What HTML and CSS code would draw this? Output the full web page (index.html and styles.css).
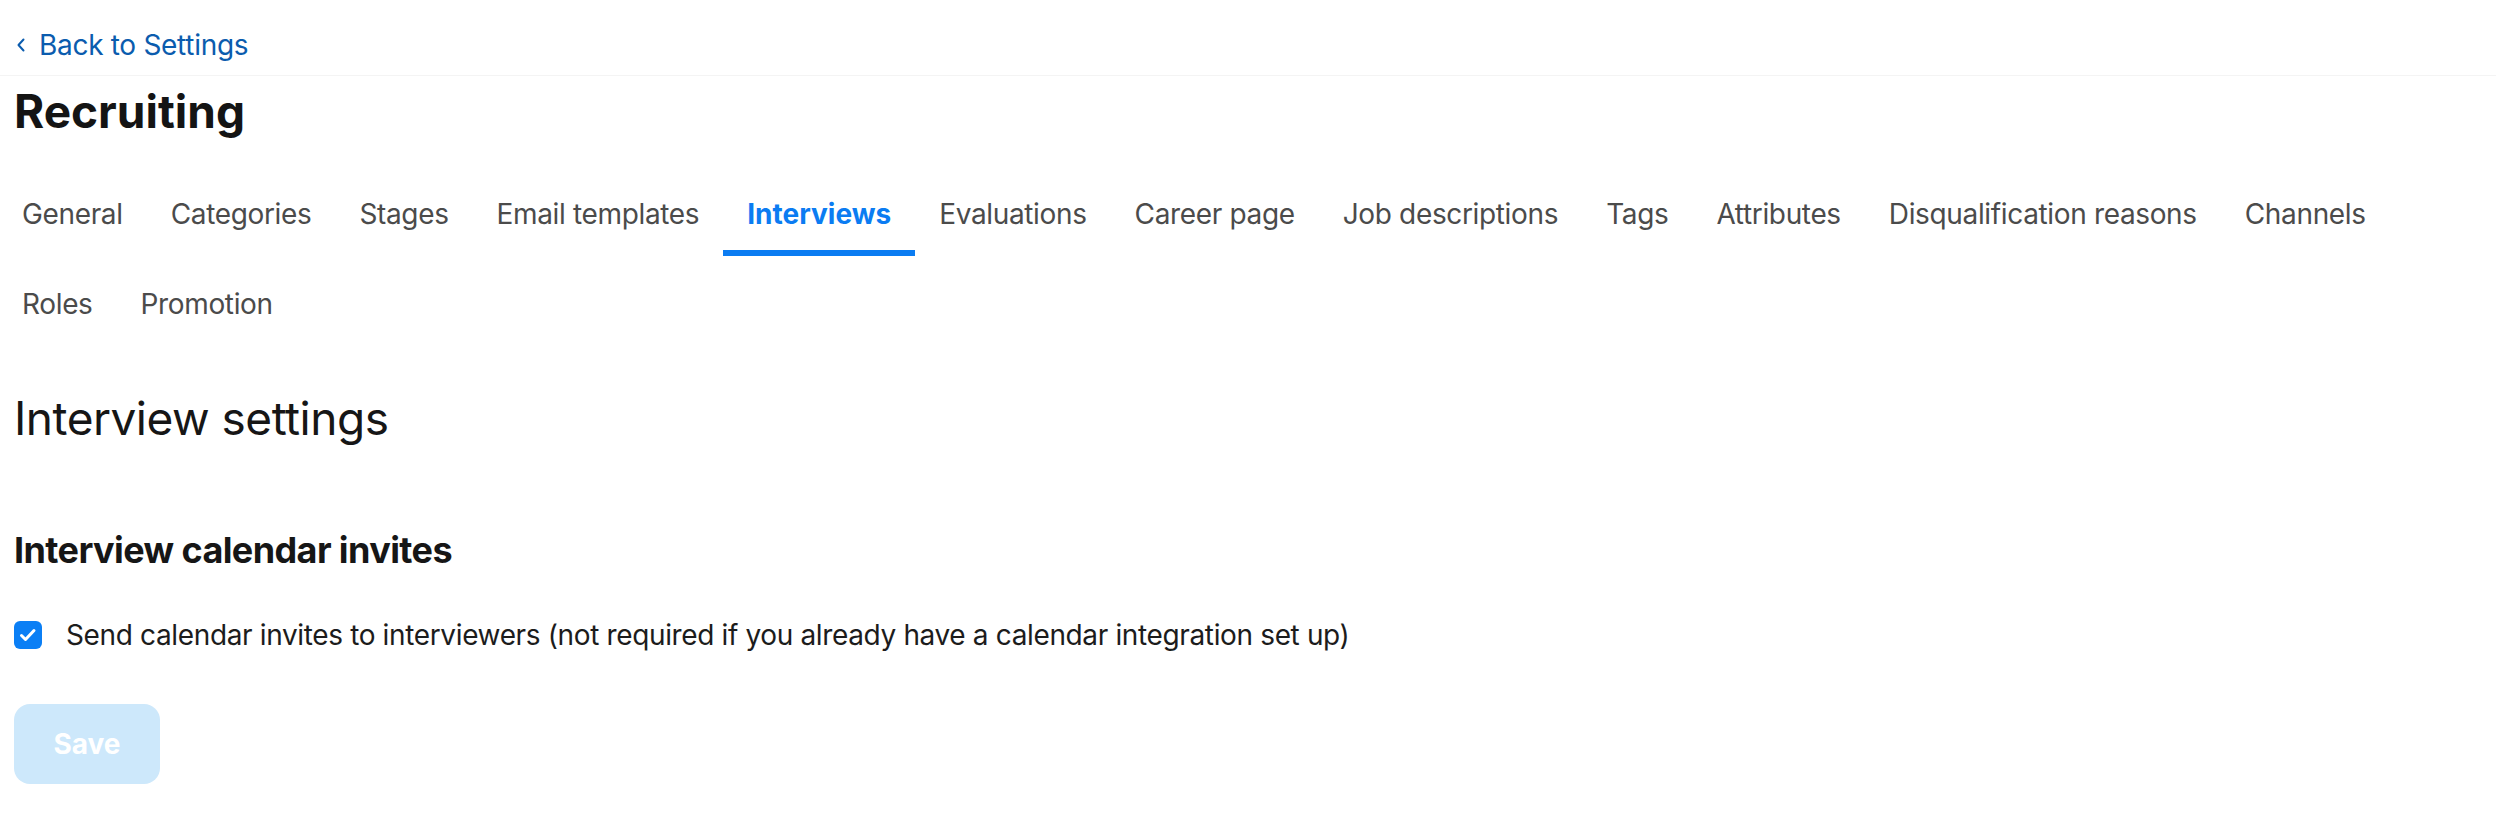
FILE: index.html
```html
<!DOCTYPE html>
<html lang="en">
<head>
<meta charset="utf-8">
<title>Recruiting settings</title>
<link rel="stylesheet" href="styles.css">
</head>
<body>
<header class="topbar">
  <a class="back" href="#">
    <svg class="back-icon" width="10" height="16" viewBox="0 0 10 16" aria-hidden="true">
      <polyline points="7.5,2.5 2.5,8 7.5,13.5" fill="none" stroke="currentColor" stroke-width="2" stroke-linecap="round" stroke-linejoin="round"/>
    </svg>
    <span>Back to Settings</span>
  </a>
</header>
<main class="page">
  <h1 class="title">Recruiting</h1>
  <nav class="tabs">
    <a class="tab" href="#">General</a>
    <a class="tab" href="#">Categories</a>
    <a class="tab" href="#">Stages</a>
    <a class="tab" href="#">Email templates</a>
    <a class="tab tab-active" href="#">Interviews</a>
    <a class="tab" href="#">Evaluations</a>
    <a class="tab" href="#">Career page</a>
    <a class="tab" href="#">Job descriptions</a>
    <a class="tab" href="#">Tags</a>
    <a class="tab" href="#">Attributes</a>
    <a class="tab" href="#">Disqualification reasons</a>
    <a class="tab" href="#">Channels</a>
    <a class="tab" href="#">Roles</a>
    <a class="tab" href="#">Promotion</a>
  </nav>
  <h2 class="section-title">Interview settings</h2>
  <h3 class="sub-title">Interview calendar invites</h3>
  <label class="check-row">
    <span class="checkbox">
      <svg width="28" height="28" viewBox="0 0 28 28" aria-hidden="true">
        <polyline points="7.5,14.5 11.5,18.5 20,9.5" fill="none" stroke="#ffffff" stroke-width="3" stroke-linecap="round" stroke-linejoin="round"/>
      </svg>
    </span>
    <span class="check-label">Send calendar invites to interviewers (not required if you already have a calendar integration set up)</span>
  </label>
  <button class="save" type="button">Save</button>
</main>
</body>
</html>
```
FILE: styles.css
```css
* {
  box-sizing: border-box;
}

html, body {
  margin: 0;
  padding: 0;
  background: #ffffff;
}

body {
  font-family: "Inter", "Liberation Sans", sans-serif;
  color: #161616;
}

.topbar {
  padding: 25px 14px 10px;
  border-bottom: 1px solid #f4f4f4;
}

.back {
  display: inline-flex;
  align-items: center;
  gap: 13px;
  font-size: 28px;
  line-height: 40px;
  letter-spacing: -0.3px;
  color: #0b5cae;
  text-decoration: none;
  padding-left: 2px;
}

.back-icon {
  display: block;
}

.page {
  padding: 0 14px;
}

.title {
  margin: 7px 0 27px;
  font-size: 46px;
  line-height: 56px;
  font-weight: 700;
  color: #141414;
}

.tabs {
  display: flex;
  flex-wrap: wrap;
  margin-left: -16px;
}

.tab {
  display: block;
  padding: 28px 24px 16px;
  font-size: 28px;
  line-height: 40px;
  letter-spacing: -0.35px;
  color: #4b4b4b;
  text-decoration: none;
  border-bottom: 6px solid transparent;
}

.tab-active {
  color: #0b7cf2;
  font-weight: 700;
  letter-spacing: 0;
  border-bottom-color: #0b7cf2;
}

.section-title {
  margin: 44px 0 0;
  font-size: 46px;
  line-height: 56px;
  font-weight: 400;
  letter-spacing: -0.5px;
  color: #161616;
}

.sub-title {
  margin: 82px 0 0;
  font-size: 36px;
  line-height: 44px;
  font-weight: 700;
  letter-spacing: -0.6px;
  color: #161616;
}

.check-row {
  display: flex;
  align-items: center;
  gap: 24px;
  margin-top: 43px;
  font-size: 28px;
  line-height: 40px;
  letter-spacing: -0.36px;
  color: #1c1c1c;
}

.checkbox {
  display: block;
  width: 28px;
  height: 28px;
  border-radius: 6px;
  background: #0b7ff5;
  flex: none;
}

.checkbox svg {
  display: block;
}

.save {
  display: flex;
  align-items: center;
  justify-content: center;
  margin-top: 49px;
  width: 146px;
  height: 80px;
  border: none;
  border-radius: 16px;
  background: #cde8fb;
  color: #ffffff;
  font-family: "Inter", "Liberation Sans", sans-serif;
  font-size: 28px;
  line-height: 40px;
  font-weight: 700;
  padding: 0;
}
```
